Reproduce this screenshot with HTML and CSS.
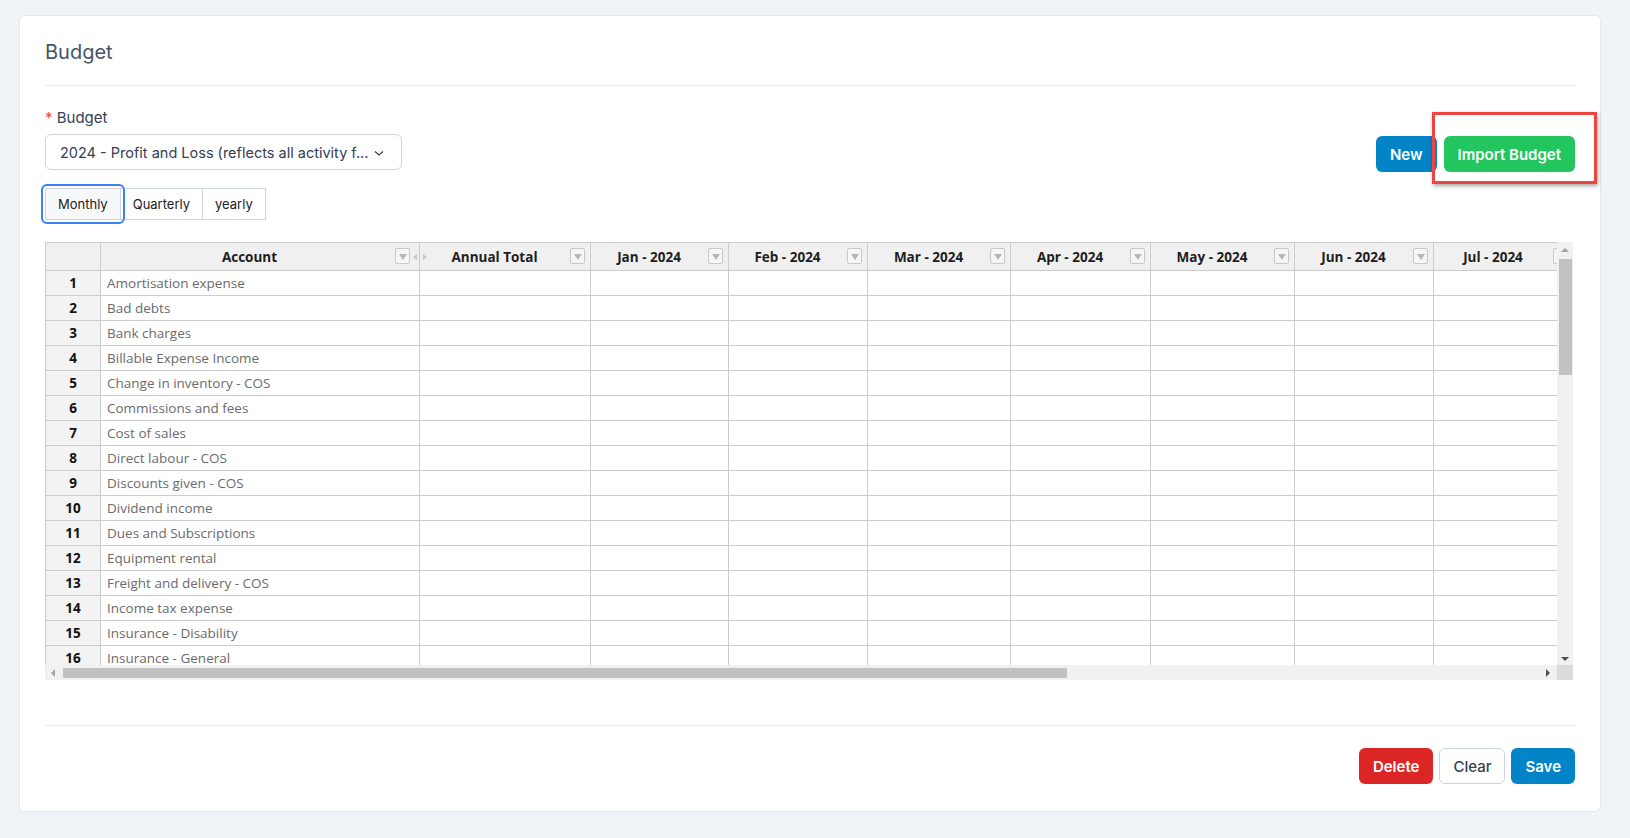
FILE: index.html
```html
<!DOCTYPE html>
<html lang="en">
<head>
    <meta charset="UTF-8">
    <meta name="viewport" content="width=device-width, initial-scale=1.0">
    <title>Budget</title>
    <link rel="stylesheet" href="styles.css">
</head>
<body>
    <div class="card">
        <div class="card-head">
            <h1 class="title">Budget</h1>
        </div>

        <div class="form-row">
            <div class="field">
                <label class="field-label"><span class="req">*</span> Budget</label>
                <div class="select">
                    <span class="select-text">2024 - Profit and Loss (reflects all activity f...</span>
                    <svg class="chevron" width="12" height="12" viewBox="0 0 12 12"><path d="M2 4.5 L6 8 L10 4.5" fill="none" stroke="#344054" stroke-width="1.2"/></svg>
                </div>
            </div>
            <div class="head-actions">
                <button class="btn btn-blue">New</button>
                <div class="import-wrap">
                    <button class="btn btn-green">Import Budget</button>
                    <div class="highlight"></div>
                </div>
            </div>
        </div>

        <div class="tabs">
            <button class="tab active">Monthly</button>
            <button class="tab">Quarterly</button>
            <button class="tab">yearly</button>
        </div>

        <div class="sheet">
            <div class="sheet-body">
                <table class="grid">
                    <colgroup>
                        <col style="width:55px"><col style="width:319px"><col style="width:171px">
                        <col style="width:138px"><col style="width:139px"><col style="width:143px">
                        <col style="width:140px"><col style="width:144px"><col style="width:139px">
                        <col style="width:140px">
                    </colgroup>
                    <thead>
                        <tr>
                            <th class="corner-cell"></th>
                            <th>Account<span class="filter"></span><span class="move"><i class="move-l"></i><i class="move-r"></i></span></th>
                            <th>Annual Total<span class="filter"></span></th>
                            <th>Jan - 2024<span class="filter"></span></th>
                            <th>Feb - 2024<span class="filter"></span></th>
                            <th>Mar - 2024<span class="filter"></span></th>
                            <th>Apr - 2024<span class="filter"></span></th>
                            <th>May - 2024<span class="filter"></span></th>
                            <th>Jun - 2024<span class="filter"></span></th>
                            <th>Jul - 2024<span class="filter"></span></th>
                        </tr>
                    </thead>
                    <tbody>
                        <tr><td class="num">1</td><td class="acc">Amortisation expense</td><td></td><td></td><td></td><td></td><td></td><td></td><td></td><td></td></tr>
                        <tr><td class="num">2</td><td class="acc">Bad debts</td><td></td><td></td><td></td><td></td><td></td><td></td><td></td><td></td></tr>
                        <tr><td class="num">3</td><td class="acc">Bank charges</td><td></td><td></td><td></td><td></td><td></td><td></td><td></td><td></td></tr>
                        <tr><td class="num">4</td><td class="acc">Billable Expense Income</td><td></td><td></td><td></td><td></td><td></td><td></td><td></td><td></td></tr>
                        <tr><td class="num">5</td><td class="acc">Change in inventory - COS</td><td></td><td></td><td></td><td></td><td></td><td></td><td></td><td></td></tr>
                        <tr><td class="num">6</td><td class="acc">Commissions and fees</td><td></td><td></td><td></td><td></td><td></td><td></td><td></td><td></td></tr>
                        <tr><td class="num">7</td><td class="acc">Cost of sales</td><td></td><td></td><td></td><td></td><td></td><td></td><td></td><td></td></tr>
                        <tr><td class="num">8</td><td class="acc">Direct labour - COS</td><td></td><td></td><td></td><td></td><td></td><td></td><td></td><td></td></tr>
                        <tr><td class="num">9</td><td class="acc">Discounts given - COS</td><td></td><td></td><td></td><td></td><td></td><td></td><td></td><td></td></tr>
                        <tr><td class="num">10</td><td class="acc">Dividend income</td><td></td><td></td><td></td><td></td><td></td><td></td><td></td><td></td></tr>
                        <tr><td class="num">11</td><td class="acc">Dues and Subscriptions</td><td></td><td></td><td></td><td></td><td></td><td></td><td></td><td></td></tr>
                        <tr><td class="num">12</td><td class="acc">Equipment rental</td><td></td><td></td><td></td><td></td><td></td><td></td><td></td><td></td></tr>
                        <tr><td class="num">13</td><td class="acc">Freight and delivery - COS</td><td></td><td></td><td></td><td></td><td></td><td></td><td></td><td></td></tr>
                        <tr><td class="num">14</td><td class="acc">Income tax expense</td><td></td><td></td><td></td><td></td><td></td><td></td><td></td><td></td></tr>
                        <tr><td class="num">15</td><td class="acc">Insurance - Disability</td><td></td><td></td><td></td><td></td><td></td><td></td><td></td><td></td></tr>
                        <tr><td class="num">16</td><td class="acc">Insurance - General</td><td></td><td></td><td></td><td></td><td></td><td></td><td></td><td></td></tr>
                    </tbody>
                </table>
            </div>
            <div class="vscroll">
                <span class="arrow-up"></span>
                <span class="vthumb"></span>
                <span class="arrow-down"></span>
            </div>
            <div class="hscroll">
                <span class="arrow-left"></span>
                <span class="hthumb"></span>
                <span class="arrow-right"></span>
            </div>
            <div class="scroll-corner"></div>
        </div>

        <div class="card-foot">
            <button class="btn btn-red">Delete</button>
            <button class="btn btn-outline">Clear</button>
            <button class="btn btn-blue">Save</button>
        </div>
    </div>
</body>
</html>
```

FILE: styles.css
```css
* { margin: 0; padding: 0; box-sizing: border-box; }
body {
    background: #f0f3f8;
    font-family: Inter, 'Noto Sans', sans-serif;
    color: #344054;
    padding: 15px 29px 0 19px;
    height: 100vh;
}
.card {
    background: #fff;
    border: 1px solid #e3e7ee;
    border-radius: 6px;
    padding: 0 25px 27px;
}
.card-head {
    padding: 24px 0 21px;
    border-bottom: 1px solid #e8ebf0;
}
.title {
    font-size: 20px;
    line-height: 24px;
    font-weight: 400;
    color: #475467;
}
.form-row {
    display: flex;
    justify-content: space-between;
    align-items: flex-end;
    margin-top: 22px;
}
.field-label {
    display: block;
    font-size: 15px;
    line-height: 20px;
    margin-bottom: 6px;
    color: #344054;
}
.req { color: #ef4444; }
.select {
    width: 357px;
    height: 36px;
    border: 1px solid #ccd3de;
    border-radius: 6px;
    display: flex;
    align-items: center;
    justify-content: space-between;
    padding: 0 16px 0 14px;
    font-size: 14.5px;
    color: #344054;
    white-space: nowrap;
    overflow: hidden;
}
.select-text { overflow: hidden; }
.chevron { margin-top: 2px; flex: none; }
.head-actions {
    display: flex;
    gap: 7px;
    margin-bottom: -2px;
}
.import-wrap { position: relative; }
.highlight {
    position: absolute;
    left: -12px;
    right: -22px;
    top: -24px;
    bottom: -12px;
    border: 3px solid #ef4444;
    box-shadow: 1px 2px 4px rgba(0, 0, 0, 0.35);
    pointer-events: none;
}
.btn {
    height: 36px;
    padding: 0 13px;
    border: 1px solid transparent;
    border-radius: 6px;
    font-family: Inter, sans-serif;
    font-size: 15px;
    font-weight: 600;
    color: #fff;
    cursor: pointer;
}
.btn-blue { background: #0284c7; }
.btn-green { background: #22c55e; }
.btn-red { background: #dc2626; }
.btn-outline {
    background: #fff;
    border-color: #cbd5e1;
    color: #344054;
    font-weight: 500;
}
.tabs {
    display: flex;
    margin-top: 18px;
}
.tab {
    height: 32px;
    padding: 0 12px;
    background: #fff;
    border: 1px solid #d0d5dd;
    margin-left: -1px;
    font-family: Inter, sans-serif;
    font-size: 13px;
    color: #222;
}
.tab:first-child { margin-left: 0; }
.tab.active {
    background: #f7f8fa;
    outline: 2px solid #3b82f6;
    outline-offset: 2px;
    border-radius: 2px;
    position: relative;
    z-index: 1;
}
.sheet {
    margin-top: 22px;
    width: 1528px;
    height: 438px;
    display: grid;
    grid-template-columns: 1512px 16px;
    grid-template-rows: 423px 15px;
    font-family: 'Open Sans', sans-serif;
}
.sheet-body {
    overflow: hidden;
    border-left: 1px solid #ccc;
    border-top: 1px solid #ccc;
}
.grid {
    border-collapse: collapse;
    table-layout: fixed;
    width: 1528px;
    margin: -1px 0 0 -1px;
}
.grid th {
    position: relative;
    height: 28px;
    padding: 0 21px 0 0;
    background: #f0f0f0;
    border: 1px solid #ccc;
    font-size: 13.5px;
    font-weight: 700;
    color: #1e1e1e;
    text-align: center;
    white-space: nowrap;
}
.grid td {
    height: 25px;
    border: 1px solid #ccc;
    font-size: 13.5px;
    padding: 0 6px;
    white-space: nowrap;
    overflow: hidden;
}
.grid td.num {
    background: #f3f3f3;
    font-weight: 700;
    color: #111;
    text-align: center;
}
.grid td.acc { color: #6b6b6b; }
.filter {
    position: absolute;
    right: 5px;
    top: 5px;
    width: 15px;
    height: 16px;
    border: 1px solid #c8c8c8;
    border-radius: 2px;
    background: #f6f6f6;
}
.filter::after {
    content: "";
    position: absolute;
    left: 3px;
    top: 5px;
    border-left: 4px solid transparent;
    border-right: 4px solid transparent;
    border-top: 6px solid #b5b5b5;
}
.grid th:nth-child(2) .filter { right: 9px; }
.move {
    position: absolute;
    right: -8px;
    top: 11px;
    width: 14px;
    height: 6px;
    z-index: 2;
}
.move-l, .move-r {
    position: absolute;
    top: 0;
    border-top: 3px solid transparent;
    border-bottom: 3px solid transparent;
}
.move-l { left: 0; border-right: 4px solid #c4c4c4; }
.move-r { right: 0; border-left: 4px solid #c4c4c4; }
.vscroll {
    position: relative;
    background: #f1f1f1;
}
.vthumb {
    position: absolute;
    left: 2px;
    right: 1px;
    top: 17px;
    height: 116px;
    background: #c1c1c1;
}
.arrow-up, .arrow-down {
    position: absolute;
    left: 4px;
    border-left: 4px solid transparent;
    border-right: 4px solid transparent;
}
.arrow-up { top: 6px; border-bottom: 4px solid #a3a3a3; }
.arrow-down { bottom: 4px; border-top: 4px solid #505050; }
.hscroll {
    position: relative;
    background: #f1f1f1;
}
.hthumb {
    position: absolute;
    left: 18px;
    top: 3px;
    bottom: 2px;
    width: 1004px;
    background: #c1c1c1;
}
.arrow-left, .arrow-right {
    position: absolute;
    top: 4px;
    border-top: 4px solid transparent;
    border-bottom: 4px solid transparent;
}
.arrow-left { left: 6px; border-right: 4px solid #a3a3a3; }
.arrow-right { right: 7px; border-left: 4px solid #505050; }
.scroll-corner { background: #dcdcdc; }
.card-foot {
    margin-top: 45px;
    border-top: 1px solid #e8ebf0;
    padding-top: 22px;
    display: flex;
    justify-content: flex-end;
    gap: 6px;
}
```
